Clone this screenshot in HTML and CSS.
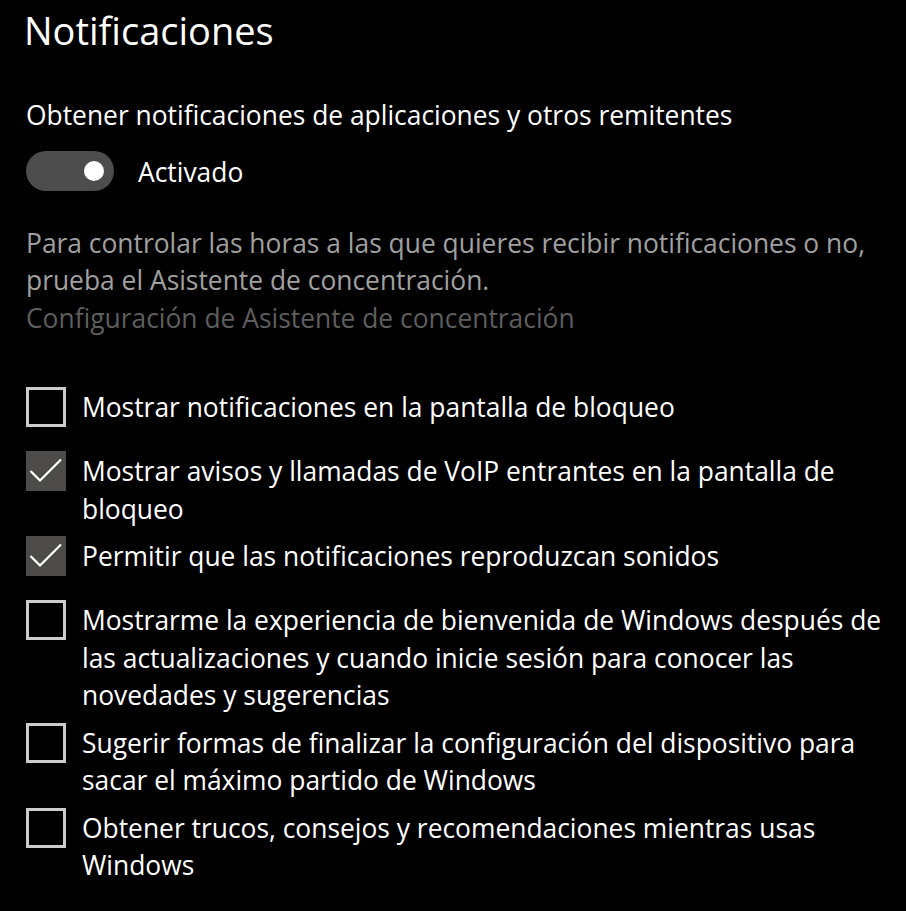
FILE: index.html
```html
<!DOCTYPE html>
<html lang="es">
<head>
<meta charset="utf-8">
<title>Notificaciones</title>
<link rel="stylesheet" href="styles.css">
</head>
<body>
<main class="page">
  <h1 class="title">Notificaciones</h1>
  <p class="label">Obtener notificaciones de aplicaciones y otros remitentes</p>
  <div class="toggle-row">
    <span class="toggle"><span class="knob"></span></span>
    <span class="toggle-text">Activado</span>
  </div>
  <p class="desc">Para controlar las horas a las que quieres recibir notificaciones o no,<br>prueba el Asistente de concentración.</p>
  <p class="link">Configuración de Asistente de concentración</p>

  <ul class="checks">
    <li class="check-row">
      <span class="box"></span>
      <span class="check-text">Mostrar notificaciones en la pantalla de bloqueo</span>
    </li>
    <li class="check-row">
      <span class="box checked"><svg viewBox="0 0 40 40" width="40" height="40"><path d="M4.5 20 L14 29.5 L35 8.5" fill="none" stroke="#fff" stroke-width="2.2"/></svg></span>
      <span class="check-text">Mostrar avisos y llamadas de VoIP entrantes en la pantalla de<br>bloqueo</span>
    </li>
    <li class="check-row">
      <span class="box checked"><svg viewBox="0 0 40 40" width="40" height="40"><path d="M4.5 20 L14 29.5 L35 8.5" fill="none" stroke="#fff" stroke-width="2.2"/></svg></span>
      <span class="check-text">Permitir que las notificaciones reproduzcan sonidos</span>
    </li>
    <li class="check-row">
      <span class="box"></span>
      <span class="check-text">Mostrarme la experiencia de bienvenida de Windows después de<br>las actualizaciones y cuando inicie sesión para conocer las<br>novedades y sugerencias</span>
    </li>
    <li class="check-row">
      <span class="box"></span>
      <span class="check-text">Sugerir formas de finalizar la configuración del dispositivo para<br>sacar el máximo partido de Windows</span>
    </li>
    <li class="check-row">
      <span class="box"></span>
      <span class="check-text">Obtener trucos, consejos y recomendaciones mientras usas<br>Windows</span>
    </li>
  </ul>
</main>
</body>
</html>
```

FILE: styles.css
```css
html, body {
  margin: 0;
  padding: 0;
  background: #000;
}
body {
  font-family: "Open Sans", "Noto Sans", sans-serif;
  color: #fff;
  font-size: 26.4px;
  line-height: 37.5px;
}
.page {
  padding: 0 0 0 26px;
}
.title {
  margin: 0;
  margin-left: -2px;
  padding-top: 6px;
  font-weight: 400;
  font-size: 38px;
  line-height: 48px;
}
.label {
  margin: 43px 0 0;
  white-space: nowrap;
}
.toggle-row {
  display: flex;
  align-items: flex-start;
  gap: 24px;
  margin-top: 16px;
}
.toggle {
  flex: none;
  width: 88px;
  height: 40px;
  border-radius: 20px;
  background: #4d4d4d;
  display: flex;
  align-items: center;
  justify-content: flex-end;
  box-sizing: border-box;
  padding-right: 10px;
}
.knob {
  width: 20px;
  height: 20px;
  border-radius: 50%;
  background: #fff;
}
.toggle-text {
  margin-top: 3px;
  margin-bottom: -3px;
}
.desc {
  margin: 34px 0 0;
  color: #a0a0a0;
  white-space: nowrap;
}
.link {
  margin: 0;
  color: #5e5e5e;
  white-space: nowrap;
}
.checks {
  list-style: none;
  margin: 50px 0 0;
  padding: 0;
}
.check-row {
  display: flex;
  align-items: flex-start;
  gap: 16px;
  min-height: 54px;
  margin-bottom: 10px;
}
.box {
  flex: none;
  width: 40px;
  height: 40px;
  box-sizing: border-box;
  border: 3px solid #cccccc;
  display: block;
}
.box.checked {
  border: none;
  background: #4d4b49;
}
.box svg {
  display: block;
}
.check-text {
  white-space: nowrap;
  margin-top: 2px;
  margin-bottom: -2px;
}
```
